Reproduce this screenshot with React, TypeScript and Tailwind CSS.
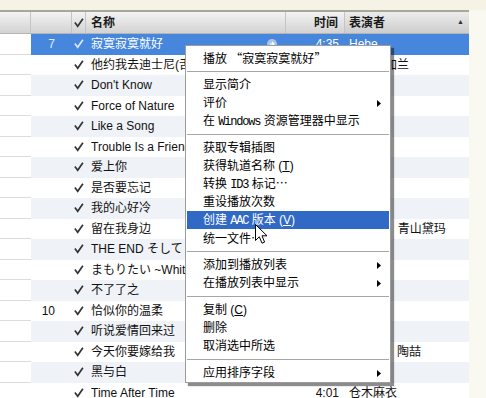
import React from 'react';

interface Song {
    num?: string;
    name: string;
    time?: string;
    artist?: string;
    jp?: boolean;
}

const songs: Song[] = [
    { num: '7', name: '寂寞寂寞就好', time: '4:35', artist: 'Hebe' },
    { name: '他约我去迪士尼(舌尖版)', time: '3:58', artist: '阿穆隆加兰' },
    { name: "Don't Know", time: '3:41' },
    { name: 'Force of Nature', time: '4:12' },
    { name: 'Like a Song', time: '3:30' },
    { name: 'Trouble Is a Friend', time: '3:36' },
    { name: '爱上你', time: '3:59' },
    { name: '是否要忘记', time: '4:20' },
    { name: '我的心好冷', time: '4:38' },
    { name: '留在我身边', time: '4:21', artist: 'SoulJa、青山黛玛' },
    { name: 'THE END そして around', time: '5:02', jp: true },
    { name: 'まもりたい ~White Wishes~', time: '4:44', jp: true },
    { name: '不了了之', time: '4:05' },
    { num: '10', name: '恰似你的温柔', time: '3:45' },
    { name: '听说爱情回来过', time: '4:17' },
    { name: '今天你要嫁给我', time: '4:29', artist: '蔡依林、陶喆' },
    { name: '黑与白', time: '4:10' },
    { name: 'Time After Time', time: '4:01', artist: '仓木麻衣' },
];

const font = "font-['Liberation_Sans','Noto_Sans_CJK_SC',sans-serif]";
const cjk = "font-['Noto_Sans_CJK_SC',sans-serif]";
const mono = "font-['Liberation_Mono',monospace] text-[12px] tracking-[-1.2px]";

function Check({ light }: { light?: boolean }) {
    return (
        <svg width="10" height="10" viewBox="0 0 10 10">
            <path
                d="M1.4 5.2 L3.7 8.2 L8.4 1.4"
                fill="none"
                stroke={light ? '#dbe8fb' : '#333'}
                strokeWidth="1.7"
                strokeLinecap="square"
            />
        </svg>
    );
}

function Arrow() {
    return (
        <svg width="4" height="7" viewBox="0 0 4 7">
            <path d="M0 0 L4 3.5 L0 7 Z" fill="#000" />
        </svg>
    );
}

function MenuItem({ children, arrow, active }: { children: React.ReactNode; arrow?: boolean; active?: boolean }) {
    return (
        <div
            className={`h-[18px] flex items-center pl-[16px] pr-[8px] ${active ? 'bg-[#316ac5] text-white' : 'text-black'}`}
        >
            <span className="flex-1 leading-none whitespace-nowrap">{children}</span>
            {arrow && <Arrow />}
        </div>
    );
}

function Sep() {
    return (
        <div className="h-[9px] flex flex-col justify-center">
            <div className="h-px bg-[#a6a6a6]" />
        </div>
    );
}

export default function App() {
    return (
        <div className={`relative w-[486px] h-[398px] overflow-hidden bg-[#f9f8f1] ${font} text-[12px]`}>
            <div className="h-[10px] bg-[#f4f3e6]" />
            <div className="h-[2px] w-[469px] bg-[#a9a898]" />

            {/* header */}
            <div className="w-[469px] h-[22px] flex items-center bg-linear-to-b from-[#f3f3f3] to-[#d3d3d3] border-b border-[#b4b4b4] font-bold text-[#1a1a1a]">
                <div className="w-[31px] h-full border-r border-[#c4c4c4]" />
                <div className="w-[41px] h-full border-r border-[#c4c4c4]" />
                <div className="w-[14px] h-full flex items-center justify-center border-r border-[#c4c4c4]">
                    <Check />
                </div>
                <div className="w-[200px] h-full flex items-center pl-[5px] border-r border-[#c4c4c4]">名称</div>
                <div className="w-[59px] h-full flex items-center justify-end pr-[6px] border-r border-[#c4c4c4]">时间</div>
                <div className="flex-1 h-full flex items-center pl-[4px] pr-[5px] bg-linear-to-b from-[#ececec] to-[#cdcdcd]">
                    <span className="flex-1">表演者</span>
                    <span className="text-[7px] text-[#333]">▲</span>
                </div>
            </div>

            {/* rows */}
            <div className="w-[469px]">
                {songs.map((s, i) => {
                    const sel = i === 0;
                    const bg = sel ? 'bg-[#4686dc] text-white' : i % 2 === 0 ? 'bg-[#eff2f7] text-[#111]' : 'bg-white text-[#111]';
                    return (
                        <div key={i} className="h-[20.5px] flex">
                            <div className="w-[31px] bg-white border-b border-[#dcdcdc]" />
                            <div className={`flex-1 flex items-center ${bg}`}>
                                <div className={`w-[41px] text-right pr-[17px] ${sel ? 'text-[#e2ecfb]' : ''}`}>{s.num}</div>
                                <div className="w-[14px] flex justify-center">
                                    <Check light={sel} />
                                </div>
                                <div
                                    className={`w-[200px] pl-[5px] pr-[4px] flex items-center whitespace-nowrap overflow-hidden ${s.jp ? "font-['Liberation_Sans','Noto_Sans_CJK_JP',sans-serif]" : ''}`}
                                >
                                    <span className="flex-1 overflow-hidden">{s.name}</span>
                                    {sel && (
                                        <span className="w-[10px] h-[10px] rounded-full bg-[#a9c4ea] flex items-center justify-center mr-[5px]">
                                            <svg width="6" height="6" viewBox="0 0 6 6">
                                                <path d="M1 3 H5 M3 1 L5 3 L3 5" stroke="#fff" strokeWidth="1.2" fill="none" />
                                            </svg>
                                        </span>
                                    )}
                                </div>
                                <div className="w-[59px] text-right pr-[6px]">{s.time}</div>
                                <div className="flex-1 pl-[4px] whitespace-nowrap overflow-hidden">{s.artist}</div>
                            </div>
                        </div>
                    );
                })}
            </div>

            {/* context menu */}
            <div className="absolute left-[185px] top-[45px] w-[206px] bg-white border border-[#9c9c9c] pt-[3px] px-px shadow-[3px_3px_1px_rgba(0,0,0,0.45)] text-[12px]">
                <MenuItem>
                    播放 <span className={cjk}>“</span>寂寞寂寞就好<span className={cjk}>”</span>
                </MenuItem>
                <Sep />
                <MenuItem>显示简介</MenuItem>
                <MenuItem arrow>评价</MenuItem>
                <MenuItem>
                    在 <span className={mono}>Windows</span> 资源管理器中显示
                </MenuItem>
                <Sep />
                <MenuItem>获取专辑插图</MenuItem>
                <MenuItem>
                    获得轨道名称 (<span className="underline">T</span>)
                </MenuItem>
                <MenuItem>
                    转换 <span className={mono}>ID3</span> 标记<span className={cjk}>…</span>
                </MenuItem>
                <MenuItem>重设播放次数</MenuItem>
                <MenuItem active>
                    创建 <span className={mono}>AAC</span> 版本 (<span className="underline">V</span>)
                </MenuItem>
                <MenuItem>
                    统一文件<span className={cjk}>…</span>
                </MenuItem>
                <Sep />
                <MenuItem arrow>添加到播放列表</MenuItem>
                <MenuItem arrow>在播放列表中显示</MenuItem>
                <Sep />
                <MenuItem>
                    复制 (<span className="underline">C</span>)
                </MenuItem>
                <MenuItem>删除</MenuItem>
                <MenuItem>取消选中所选</MenuItem>
                <Sep />
                <MenuItem arrow>应用排序字段</MenuItem>
            </div>

            {/* mouse cursor */}
            <svg className="absolute left-[255px] top-[224px]" width="14" height="21" viewBox="0 0 14 21">
                <path
                    d="M0.5 0.5 L0.5 16.5 L4.3 12.8 L7 19.2 L9.6 18.1 L7 11.8 L12 11.8 Z"
                    fill="#fff"
                    stroke="#000"
                    strokeWidth="1"
                    strokeLinejoin="miter"
                />
            </svg>
        </div>
    );
}
